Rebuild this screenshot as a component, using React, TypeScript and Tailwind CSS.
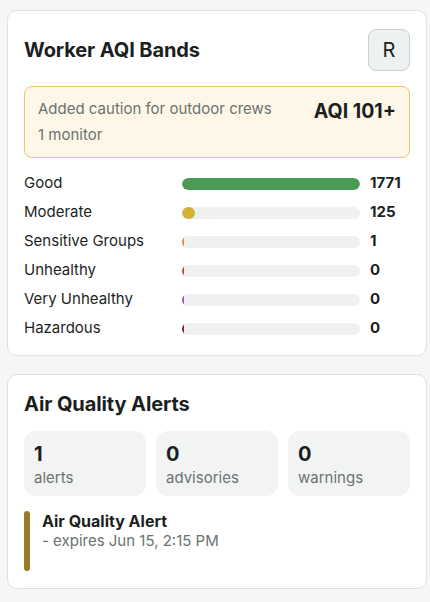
import React from "react";

const bands = [
  { label: "Good", value: 1771, color: "bg-[#4a9a57]" },
  { label: "Moderate", value: 125, color: "bg-[#d4b23a]" },
  { label: "Sensitive Groups", value: 1, color: "bg-[#e08a3c]" },
  { label: "Unhealthy", value: 0, color: "bg-[#c84a3f]" },
  { label: "Very Unhealthy", value: 0, color: "bg-[#8e5bb5]" },
  { label: "Hazardous", value: 0, color: "bg-[#7a2535]" },
];

const max = 1771;

export default function App() {
  return (
    <div
      className="min-h-[602px] bg-[#f5f6f5] pl-[7px] pr-[3px] pt-[10px] pb-[12px] text-[#1c1f1e]"
      style={{ fontFamily: "Inter, 'Noto Sans', sans-serif" }}
    >
      <div className="flex flex-col gap-[18px]">
        {/* Card 1 */}
        <div className="rounded-[10px] border border-[#dde1df] bg-white px-[16px] pt-[18px] pb-[12px]">
          <div className="flex items-center justify-between">
            <h2 className="text-[20px] font-bold leading-7 tracking-[-0.1px]">Worker AQI Bands</h2>
            <div className="flex h-[42px] w-[42px] items-center justify-center rounded-lg border border-[#c9d1cd] bg-[#edf2f0] text-[20px] text-[#1c1f1e]">
              R
            </div>
          </div>
          <div className="mt-[15px] flex items-start justify-between rounded-lg border border-[#efc567] bg-[#fef7e7] px-[13px] pt-[12px] pb-[12px]">
            <div className="flex flex-col gap-[6px] text-[15px] leading-5 text-[#6b7270]">
              <span>Added caution for outdoor crews</span>
              <span>1 monitor</span>
            </div>
            <div className="mt-[-2px] text-[19.5px] font-bold leading-7">AQI 101+</div>
          </div>
          <div className="mt-[11px] grid grid-cols-[148px_1fr_40px] gap-x-[10px]">
            {bands.map((b) => {
              const pct = Math.max((b.value / max) * 100, 1.2);
              return (
                <React.Fragment key={b.label}>
                  <div className="flex h-[29px] items-center text-[15px]">{b.label}</div>
                  <div className="flex h-[29px] items-center">
                    <div className="h-3 w-full overflow-hidden rounded-full bg-[#eff1f0]">
                      <div className={`h-full rounded-full ${b.color}`} style={{ width: `${pct}%` }} />
                    </div>
                  </div>
                  <div className="flex h-[29px] items-center text-[15px] font-bold">{b.value}</div>
                </React.Fragment>
              );
            })}
          </div>
        </div>

        {/* Card 2 */}
        <div className="rounded-[10px] border border-[#dde1df] bg-white px-[16px] pt-[15px] pb-[17px]">
          <h2 className="text-[20px] font-bold leading-7 tracking-[-0.1px]">Air Quality Alerts</h2>
          <div className="mt-[13px] grid grid-cols-3 gap-[10px]">
            {[
              ["1", "alerts"],
              ["0", "advisories"],
              ["0", "warnings"],
            ].map(([n, l]) => (
              <div key={l} className="flex h-[65px] flex-col rounded-xl bg-[#f2f4f3] px-[10px] pt-[9px]">
                <span className="text-[20px] font-bold leading-7">{n}</span>
                <span className="text-[15px] leading-5 text-[#6b7270]">{l}</span>
              </div>
            ))}
          </div>
          <div className="mt-[15px] flex min-h-[60px] gap-[12px]">
            <div className="w-[6px] self-stretch rounded-full bg-[#9a7a28]" />
            <div className="flex flex-col">
              <span className="text-[16px] font-bold leading-5">Air Quality Alert</span>
              <span className="text-[15px] leading-5 text-[#6b7270]">- expires Jun 15, 2:15 PM</span>
            </div>
          </div>
        </div>
      </div>
    </div>
  );
}
